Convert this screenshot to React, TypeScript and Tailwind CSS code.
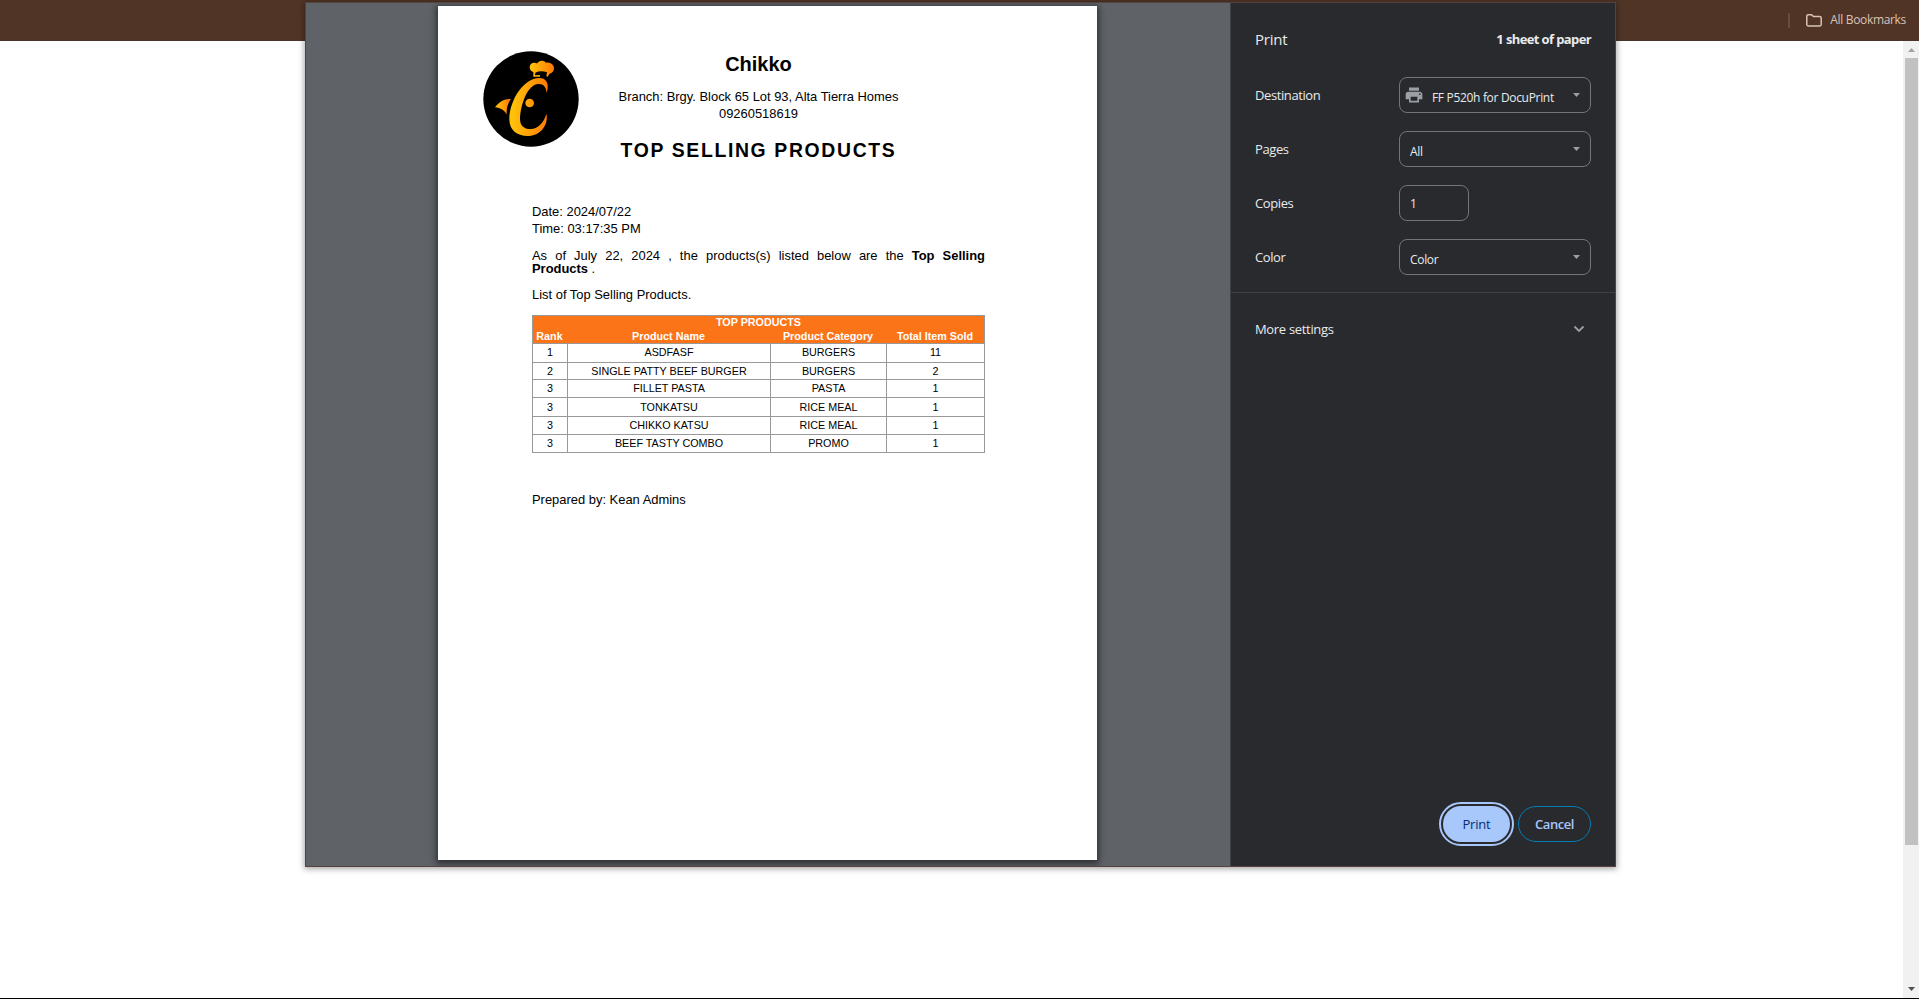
import type { ReactNode } from "react";

const rows = [
  { rank: 1, name: "ASDFASF", category: "BURGERS", sold: 11, h: "h-[19px]", pad: "pb-[3px]" },
  { rank: 2, name: "SINGLE PATTY BEEF BURGER", category: "BURGERS", sold: 2, h: "h-[17px]", pad: "" },
  { rank: 3, name: "FILLET PASTA", category: "PASTA", sold: 1, h: "h-[18px]", pad: "pb-px" },
  { rank: 3, name: "TONKATSU", category: "RICE MEAL", sold: 1, h: "h-[19px]", pad: "" },
  { rank: 3, name: "CHIKKO KATSU", category: "RICE MEAL", sold: 1, h: "h-[18px]", pad: "pb-px" },
  { rank: 3, name: "BEEF TASTY COMBO", category: "PROMO", sold: 1, h: "h-[18px]", pad: "pb-px" },
];

const columns = "grid grid-cols-[35px_203px_116px_98px]";

function Logo() {
  return (
    <svg viewBox="39 33 288 288" className="size-24 shrink-0">
      <defs>
        <linearGradient id="gold" gradientUnits="userSpaceOnUse" x1="120" y1="0" x2="236" y2="0">
          <stop offset="0" stopColor="#ffc60a" />
          <stop offset="1" stopColor="#ff7a05" />
        </linearGradient>
        <linearGradient id="hat" gradientUnits="userSpaceOnUse" x1="178" y1="0" x2="252" y2="0">
          <stop offset="0" stopColor="#ffc60a" />
          <stop offset="1" stopColor="#ff7a05" />
        </linearGradient>
        <linearGradient id="fin" gradientUnits="userSpaceOnUse" x1="76" y1="0" x2="122" y2="0">
          <stop offset="0" stopColor="#ffc60a" />
          <stop offset="1" stopColor="#ff7a05" />
        </linearGradient>
      </defs>
      <circle cx="183" cy="177" r="143" fill="#000" />
      <path
        fill="url(#gold)"
        d="M230 158C238 133 231 114 207 114C162 115 119 178 118 238C118 271 141 288 173 288C210 288 237 255 229 221C222 248 203 267 182 267C161 267 150 256 150 236C152 194 172 134 205 132C220 131 228 141 230 158Z"
      />
      <circle cx="179" cy="189" r="13" fill="url(#gold)" />
      <path fill="url(#fin)" d="M75 202C87 186 102 176 123 177C113 190 109 205 110 224C104 211 92 204 75 202Z" />
      <path
        fill="url(#hat)"
        d="M190 110L190 96C176 92 175 70 191 68C196 68 199 69 202 70C206 61 221 60 228 68C243 64 256 78 251 91C248 98 243 100 239 101L232 111L229 108L231 97C219 93 207 93 196 98L195 106L210 105L210 110Z"
      />
    </svg>
  );
}

function Caret() {
  return (
    <svg viewBox="0 0 7 4" className="h-1 w-[7px] shrink-0 fill-[#9aa0a6]">
      <path d="M0 0H7L3.5 4Z" />
    </svg>
  );
}

function Field({ label, children }: { label: string; children: ReactNode }) {
  return (
    <div className="flex h-[54px] items-center justify-between">
      <span className="text-[13px] leading-5 tracking-[-0.4px]">{label}</span>
      <div className="flex w-48">{children}</div>
    </div>
  );
}

function Select({ icon, children }: { icon?: ReactNode; children: ReactNode }) {
  return (
    <div className="flex h-9 w-48 items-center rounded-lg border border-[#757575] pr-[10px] pl-[10px] text-xs">
      {icon}
      <span className="flex-1 pt-[5px] leading-4 tracking-[-0.32px] whitespace-nowrap">{children}</span>
      <Caret />
    </div>
  );
}

function Report() {
  return (
    <article className="relative z-10 h-[854px] w-[659px] bg-white pt-[45px] font-['Liberation_Sans',Arial,sans-serif] text-[12.93px] text-black shadow-[0_2px_6px_2px_rgba(32,33,36,0.75)]">
      <header className="flex pl-[45px]">
        <Logo />
        <div className="flex w-[359px] flex-col items-center text-center">
          <h1 className="h-[37px] text-[20px] leading-[26px] font-bold">Chikko</h1>
          <p className="leading-[17px]">Branch: Brgy. Block 65 Lot 93, Alta Tierra Homes</p>
          <p className="leading-[17px]">09260518619</p>
          <h2 className="mt-[16px] h-[26px] text-[19.4px] leading-6 font-bold tracking-[1.65px] whitespace-nowrap">
            TOP SELLING PRODUCTS
          </h2>
        </div>
      </header>
      <section className="mt-[39px] ml-[94px] w-[453px]">
        <p className="leading-[17px]">Date: 2024/07/22</p>
        <p className="leading-[17px]">Time: 03:17:35 PM</p>
        <p className="mt-[12px] leading-[13px]">
          <span className="block text-justify [text-align-last:justify]">
            As of July 22, 2024 , the products(s) listed below are the <b>Top Selling</b>
          </span>
          <b>Products</b> .
        </p>
        <p className="mt-[13px] leading-[13px]">List of Top Selling Products.</p>
        <div className="mt-[14px] border-t border-l border-[#999] text-center text-[10.75px]">
          <div className="h-[27px] border-r border-[#999] bg-[#fb7417] font-bold text-white">
            <div className="h-[13px] leading-[13px]">TOP PRODUCTS</div>
            <div className={columns + " -ml-px h-[14px] leading-[14px] whitespace-nowrap"}>
              <span>Rank</span>
              <span>Product Name</span>
              <span>Product Category</span>
              <span>Total Item Sold</span>
            </div>
          </div>
          <div className="border-t border-[#999]">
            {rows.map((r) => (
              <div
                key={r.name}
                className={
                  columns +
                  " items-stretch border-b border-[#999] leading-4 *:flex *:items-center *:justify-center *:border-r *:border-[#999] " +
                  r.h
                }
              >
                <span className={r.pad}>{r.rank}</span>
                <span className={r.pad}>{r.name}</span>
                <span className={r.pad}>{r.category}</span>
                <span className={r.pad}>{r.sold}</span>
              </div>
            ))}
          </div>
        </div>
        <p className="mt-[38px] leading-[17px]">Prepared by: Kean Admins</p>
      </section>
    </article>
  );
}

function Settings() {
  return (
    <aside className="flex w-[385px] flex-col border-l border-[#3f4145] bg-[#292a2d] text-[#e8eaed]">
      <div className="flex h-[65px] items-center justify-between px-6 pt-[7px]">
        <h2 className="text-[15px] leading-5 tracking-[-0.25px]">Print</h2>
        <span className="text-[13px] leading-5 font-bold tracking-[-0.62px]">1 sheet of paper</span>
      </div>
      <div className="flex h-[225px] flex-col border-b border-[#3f4145] px-6">
        <Field label="Destination">
          <Select
            icon={
              <svg viewBox="0 0 24 24" className="mt-[-1px] mr-[8px] ml-[-6px] size-5 shrink-0 fill-[#9aa0a6]">
                <path d="M19 8H5c-1.66 0-3 1.34-3 3v6h4v4h12v-4h4v-6c0-1.66-1.34-3-3-3zm-3 11H8v-5h8v5zm3-7c-.55 0-1-.45-1-1s.45-1 1-1 1 .45 1 1-.45 1-1 1zm-1-9H6v4h12V3z" />
              </svg>
            }
          >
            FF P520h for DocuPrint
          </Select>
        </Field>
        <Field label="Pages">
          <Select>All</Select>
        </Field>
        <Field label="Copies">
          <div className="flex h-9 w-[70px] items-center rounded-lg border border-[#757575] px-[10px] pt-px text-xs">1</div>
        </Field>
        <Field label="Color">
          <Select>Color</Select>
        </Field>
      </div>
      <div className="flex h-[72px] items-center justify-between pr-[30px] pl-6">
        <span className="-mt-px text-[13px] leading-5 tracking-[-0.32px]">More settings</span>
        <svg viewBox="0 0 12 8" className="h-2 w-3 fill-none stroke-[#9aa0a6] stroke-[1.8]">
          <path d="M1.5 1.5L6 6L10.5 1.5" />
        </svg>
      </div>
      <div className="mt-auto flex gap-2 self-end pr-6 pb-6 text-[13px] font-medium">
        <button className="h-9 w-[67px] rounded-full bg-[#a8c7fa] pt-0.5 tracking-[-0.2px] text-[#062e6f] outline-2 outline-offset-2 outline-[#a8c7fa]">
          Print
        </button>
        <button className="h-9 w-[73px] rounded-full border border-[#047db7] pt-0.5 font-semibold tracking-[-0.45px] text-[#a8c7fa]">
          Cancel
        </button>
      </div>
    </aside>
  );
}

export default function App() {
  return (
    <div className="relative flex h-[999px] w-[1919px] flex-col overflow-hidden border-b border-black bg-white font-['Open_Sans','Noto_Sans',sans-serif]">
      <div className="flex h-[41px] shrink-0 items-center justify-end border-b border-[#47352d] bg-[#503527] pr-[13px] text-[#d8c2b8]">
        <span className="h-[15px] w-[2px] bg-[#6b4b3d]" />
        <svg viewBox="0 0 16 13" className="mr-[8px] ml-4 h-[13px] w-4 fill-none stroke-current stroke-[1.5]">
          <path d="M0.8 2.2Q0.8 0.8 2.2 0.8H5.6L7.4 2.6H13.8Q15.2 2.6 15.2 4V10.6Q15.2 12 13.8 12H2.2Q0.8 12 0.8 10.6Z" />
        </svg>
        <span className="text-xs leading-4 tracking-[-0.33px]">All Bookmarks</span>
      </div>
      <div className="flex min-h-0 flex-1 justify-end">
        <div className="flex w-4 flex-col items-center bg-[#f1f1f1]">
          <svg viewBox="0 0 7 4" className="mt-[7px] h-1 w-[7px] fill-[#a3a3a3]">
            <path d="M3.5 0L7 4H0Z" />
          </svg>
          <div className="mt-[6px] h-[787px] w-[13px] bg-[#c1c1c1]" />
          <svg viewBox="0 0 7 4" className="mt-auto mb-[7px] h-1 w-[7px] fill-[#505050]">
            <path d="M0 0H7L3.5 4Z" />
          </svg>
        </div>
      </div>
      <div className="absolute top-[2px] left-[305px] flex h-[865px] w-[1311px] border border-[#54443d] shadow-[0_1px_6px_1px_rgba(0,0,0,0.35)]">
        <main className="flex flex-1 overflow-hidden bg-[#5f6368] pt-[3px] pl-[132px]">
          <Report />
        </main>
        <Settings />
      </div>
    </div>
  );
}
